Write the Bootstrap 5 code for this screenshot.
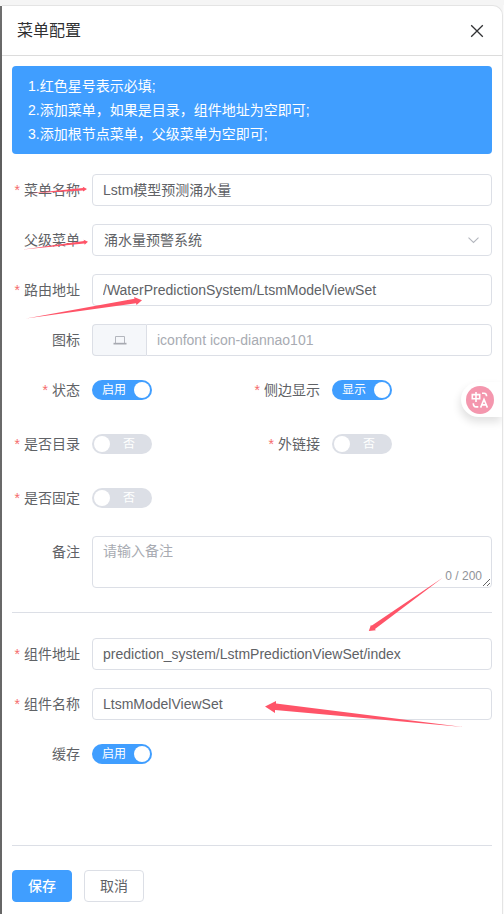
<!DOCTYPE html>
<html lang="zh-CN">
<head>
<meta charset="utf-8">
<meta name="viewport" content="width=device-width, initial-scale=1">
<title>菜单配置</title>
<link href="https://cdn.jsdelivr.net/npm/bootstrap@5.3.0/dist/css/bootstrap.min.css" rel="stylesheet">
<style>
  :root { --blue: #409eff; --line: #dcdfe6; --ink: #606266; }
  body { font-family: "Liberation Sans", "Noto Sans CJK SC", sans-serif; font-size: 14px; color: var(--ink); background: #f5f5f5; height: 914px; overflow: hidden; }
  .page-edge { height: 914px; padding-top: 5px; }
  .mask-strip { width: 2px; margin-top: 1px; background: linear-gradient(#707070, #5c5c5c 12%, #6a6a6a 40%, #666 100%); }
  .drawer { width: 501px; border-top: 1px solid #e4e4e4; border-right: 1px solid #e4e4e4; border-top-right-radius: 10px; background: #fff; }
  .right-gap { width: 1px; background: #fafafa; }
  .drawer-head { height: 50px; border-bottom: 1px solid #dcdcdc; padding: 0 18px 0 15px; font-size: 16px; color: #303133; }
  .drawer-body { padding: 10px; }
  .tips { height: 88px; padding: 8px 16px; line-height: 24px; background: var(--blue); border-radius: 4px; margin-bottom: 20px; }
  .field { margin-bottom: 18px; min-height: 32px; }
  .field-sw { margin-bottom: 22px; }
  .field-label { width: 80px; padding-right: 12px; line-height: 32px; text-align: right; flex: none; white-space: nowrap; }
  .req::before { content: "*"; color: #f56c6c; margin-right: 4px; }
  .form-control, .form-control:focus { height: 32px; border: 1px solid var(--line); border-radius: 4px; padding: 0 10px; font-size: 14px; line-height: 30px; color: var(--ink); box-shadow: none; }
  .form-control.cjk-value { padding-bottom: 2px; }
  .form-control.select-value { padding-left: 11px; }
  .form-control::placeholder { color: #a8abb2; }
  textarea.form-control, textarea.form-control:focus { height: 52px; min-height: 52px; padding: 4px 10px; line-height: 21px; resize: vertical; display: block; }
  .icon-cell { width: 54px; background: #f5f7fa; border: 1px solid var(--line); border-radius: 4px; }
  .chev { right: 12px; top: 10px; }
  .counter { right: 10px; bottom: 5px; font-size: 12px; line-height: 14px; color: #909399; }
  .toggle { width: 60px; height: 20px; border-radius: 10px; padding: 0 2px 0 10px; background: var(--blue); color: #fff; font-size: 12px; line-height: 20px; }
  .toggle i { width: 16px; height: 16px; border-radius: 50%; background: #fff; }
  .toggle.off { background: var(--line); padding: 0 17px 0 2px; }
  .rule { height: 1px; background: var(--line); }
  .rule-mid { margin: 24px 0 25px; }
  .rule-foot { margin: 75px 0 24px; }
  .act { width: 60px; height: 32px; padding: 0; font-size: 14px; border-radius: 4px; line-height: 30px; border: 1px solid var(--line); color: var(--ink); background: #fff; }
  .act-main { background: var(--blue); border-color: var(--blue); color: #fff; font-weight: 500; }
  .float-tab { right: 2px; top: 382px; width: 41px; height: 35px; border-radius: 18px 0 0 18px; background: #fff; box-shadow: -1px 5px 8px rgba(0,0,0,.12); padding-left: 5px; clip-path: inset(-12px 0 -18px -14px); }
  .marks { left: 0; top: 0; pointer-events: none; }
</style>
<script src="https://cdn.jsdelivr.net/npm/bootstrap@5.3.0/dist/js/bootstrap.bundle.min.js"></script>
</head>
<body class="position-relative">
<div class="page-edge d-flex">
  <div class="mask-strip"></div>
  <main class="drawer">
    <header class="drawer-head d-flex align-items-center justify-content-between">
      <span>菜单配置</span>
      <svg width="14" height="14" viewBox="0 0 14 14" stroke="#303133" stroke-width="1.3" fill="none"><path d="M1.2 1.2 12.8 12.8M12.8 1.2 1.2 12.8"/></svg>
    </header>
    <div class="drawer-body">
      <div class="tips text-white">
        <div>1.红色星号表示必填;</div>
        <div>2.添加菜单，如果是目录，组件地址为空即可;</div>
        <div>3.添加根节点菜单，父级菜单为空即可;</div>
      </div>
      <div class="field d-flex"><label class="field-label req">菜单名称</label><input class="form-control cjk-value" value="Lstm模型预测涌水量"></div>
      <div class="field d-flex"><label class="field-label">父级菜单</label>
        <div class="position-relative w-100"><input class="form-control cjk-value select-value" value="涌水量预警系统">
          <svg class="chev position-absolute" width="13" height="13" viewBox="0 0 13 13" fill="none" stroke="#b4b7be" stroke-width="1.1"><path d="M1.5 3.7 6.5 8.4 11.5 3.7"/></svg></div></div>
      <div class="field d-flex"><label class="field-label req">路由地址</label><input class="form-control" value="/WaterPredictionSystem/LtsmModelViewSet"></div>
      <div class="field d-flex"><label class="field-label">图标</label>
        <div class="d-flex w-100">
          <span class="icon-cell d-flex align-items-center justify-content-center flex-shrink-0 rounded-end-0 border-end-0"><svg width="14" height="10" viewBox="0 0 14 10"><path d="M2.5 8V1.5H11.5V8" fill="none" stroke="#b3b6bd"/><path d="M.5 7.8h13v1.7H.5z" fill="#a6a9b0"/></svg></span>
          <input class="form-control rounded-start-0" placeholder="iconfont icon-diannao101">
        </div></div>
      <div class="row g-0">
        <div class="col-6 field field-sw d-flex align-items-center"><label class="field-label req">状态</label><span class="toggle d-flex align-items-center justify-content-between">启用<i></i></span></div>
        <div class="col-6 field field-sw d-flex align-items-center"><label class="field-label req">侧边显示</label><span class="toggle d-flex align-items-center justify-content-between">显示<i></i></span></div>
        <div class="col-6 field field-sw d-flex align-items-center"><label class="field-label req">是否目录</label><span class="toggle off d-flex align-items-center justify-content-between"><i></i>否</span></div>
        <div class="col-6 field field-sw d-flex align-items-center"><label class="field-label req">外链接</label><span class="toggle off d-flex align-items-center justify-content-between"><i></i>否</span></div>
        <div class="col-6 field field-sw d-flex align-items-center"><label class="field-label req">是否固定</label><span class="toggle off d-flex align-items-center justify-content-between"><i></i>否</span></div>
      </div>
      <div class="d-flex"><label class="field-label">备注</label>
        <div class="position-relative w-100"><textarea class="form-control" placeholder="请输入备注"></textarea><span class="counter position-absolute">0 / 200</span></div></div>
      <div class="rule rule-mid"></div>
      <div class="field d-flex"><label class="field-label req">组件地址</label><input class="form-control" value="prediction_system/LstmPredictionViewSet/index"></div>
      <div class="field d-flex"><label class="field-label req">组件名称</label><input class="form-control" value="LtsmModelViewSet"></div>
      <div class="d-flex align-items-center"><label class="field-label">缓存</label><span class="toggle d-flex align-items-center justify-content-between">启用<i></i></span></div>
      <div class="rule rule-foot"></div>
      <div class="d-flex gap-2"><button class="btn act act-main me-1">保存</button><button class="btn act">取消</button></div>
    </div>
  </main>
  <div class="right-gap"></div>
</div>
<div class="float-tab position-absolute d-flex align-items-center">
  <svg width="28" height="28" viewBox="0 0 28 28" fill="none" stroke="#fff" stroke-width="1.6"><circle cx="14" cy="14" r="14" fill="#f497ae" stroke="none"/><path d="M6.3 8.6h7.4v4.2H6.3zM10 6v10M16 7.3h2q2.6 0 2.6 3M7.3 17.3q0 3.6 2.8 3.6h2.2M14.6 21.6 18 13.4l3.4 8.2M15.9 18.9h4.2"/></svg>
</div>
<svg class="marks position-absolute" width="504" height="914" viewBox="0 0 504 914" fill="#ff5468">
  <path d="M28 193.5 83 188 82.8 186.8 87 189 83.2 191.6 83 190.5Z"/>
  <path d="M23 249.5 84 241 83.6 239.8 88 241.8 84.6 244.7 84.4 243.6Z"/>
  <path d="M26 318.5 134.5 298.8 134 297 142 300.2 136.5 304.9 136 303.3Z"/>
  <path d="M443 577.5 371.5 625.8 371 624.8 368.8 631 375.8 630.2 375 629Z"/>
  <path d="M463 727 276 703.6 276 700.9 265 706.4 275 713 275 710Z"/>
</svg>
</body>
</html>
